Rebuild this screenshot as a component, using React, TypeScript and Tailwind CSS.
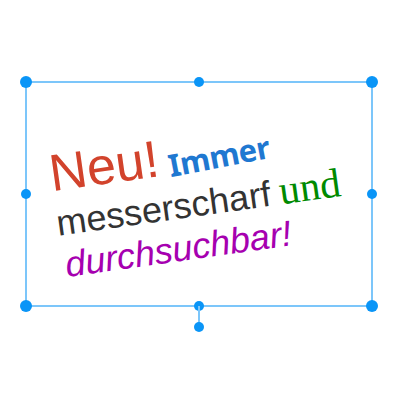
import React from "react";

const Handle = ({ cls, big }: { cls: string; big?: boolean }) => (
  <div
    className={`absolute rounded-full bg-[#0a95f7] ${big ? "w-[12px] h-[12px] -ml-[6px] -mt-[6px]" : "w-[10px] h-[10px] -ml-[5px] -mt-[5px]"} ${cls}`}
  />
);

export default function App() {
  return (
    <div className="w-[400px] h-[400px] bg-white pt-[82px] pl-[26px]">
      <div className="relative w-[346px] h-[224px]">
        <div className="absolute -inset-[1px] border-[2px] border-[#7cc6fa]" />
        <div className="absolute inset-0 flex items-center justify-center">
          <div
            className="flex flex-col items-start -rotate-[8deg] translate-y-[1px] -translate-x-[2px] leading-none"
            style={{ fontFamily: '"Liberation Sans", Arial, sans-serif' }}
          >
            <div className="flex items-baseline whitespace-nowrap">
              <span className="text-[52px] text-[#d2432c]">Neu!</span>
              <span
                className="text-[31px] font-bold text-[#1f78d1] ml-[9px] tracking-[-0.5px] -rotate-[3deg] inline-block"
                style={{ fontFamily: '"Noto Sans", sans-serif' }}
              >
                Immer
              </span>
            </div>
            <div className="flex items-baseline whitespace-nowrap mt-[3px]">
              <span className="text-[36px] text-[#333333]">messerscharf</span>
              <span
                className="text-[41px] text-[#008a00] ml-[9px]"
                style={{ fontFamily: '"Liberation Serif", serif' }}
              >
                und
              </span>
            </div>
            <div className="whitespace-nowrap mt-[5px] ml-[3px]">
              <span className="text-[36px] italic text-[#a600b0]">durchsuchbar!</span>
            </div>
          </div>
        </div>
        <Handle big cls="left-0 top-0" />
        <Handle cls="left-1/2 top-0" />
        <Handle big cls="left-full top-0" />
        <Handle cls="left-0 top-1/2" />
        <Handle cls="left-full top-1/2" />
        <Handle big cls="left-0 top-full" />
        <Handle cls="left-1/2 top-full" />
        <Handle big cls="left-full top-full" />
        <div className="absolute left-1/2 top-full w-[2px] h-[21px] -ml-[1px] bg-[#7cc6fa]" />
        <Handle cls="left-1/2 top-[calc(100%+21px)]" />
      </div>
    </div>
  );
}
